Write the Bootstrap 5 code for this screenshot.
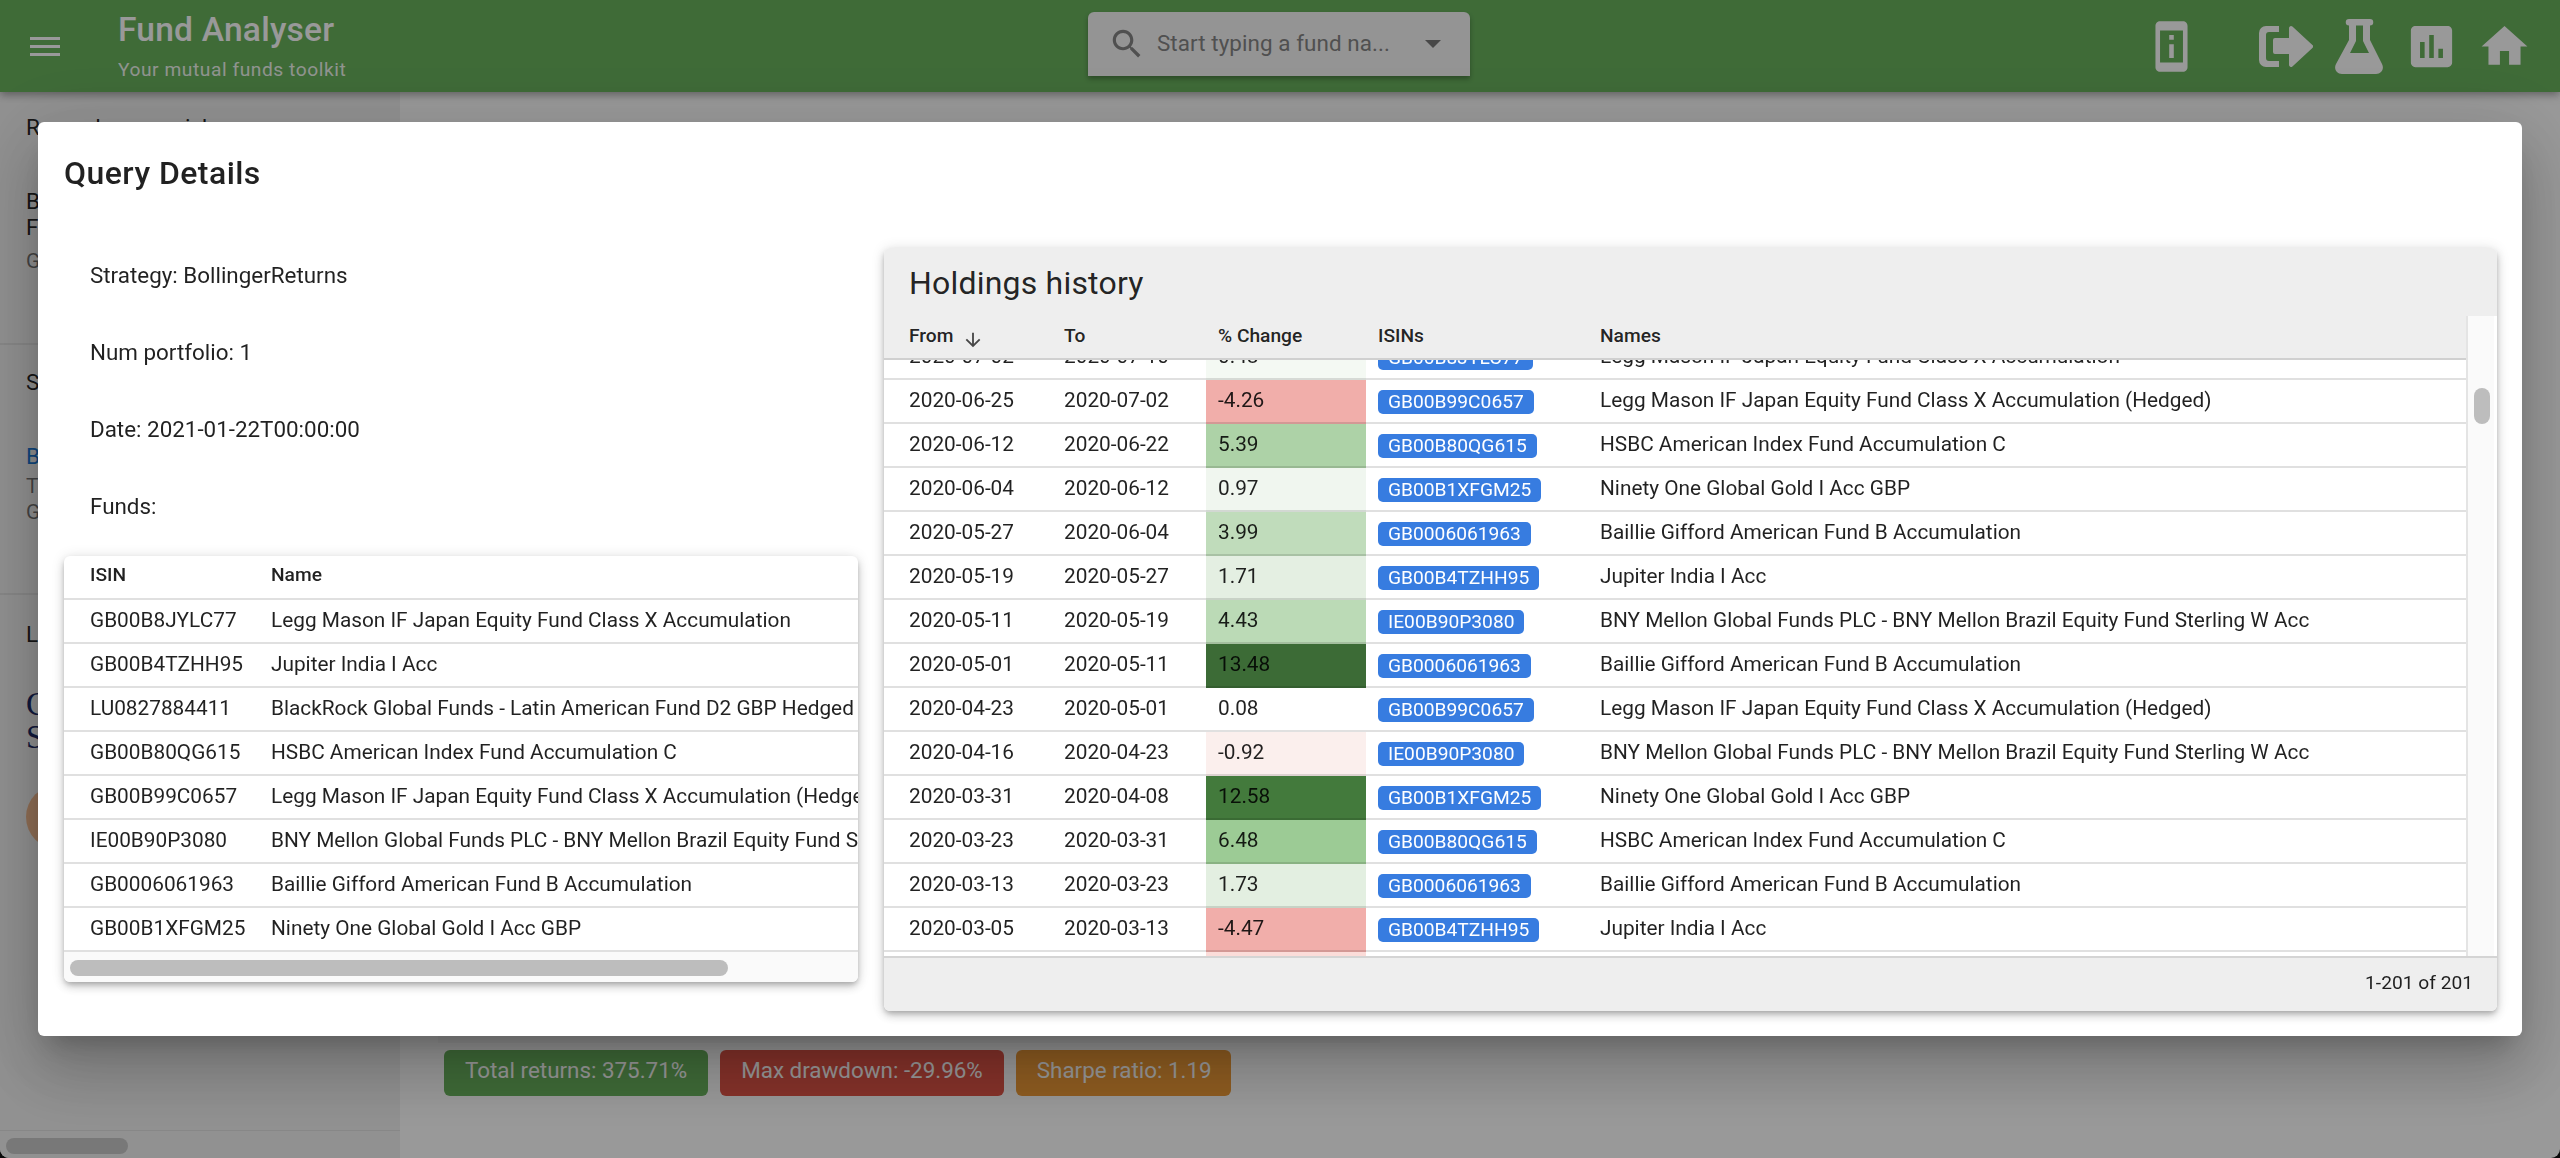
<!DOCTYPE html>
<html lang="en">
<head>
    <meta charset="UTF-8">
    <meta name="viewport" content="width=device-width, initial-scale=1.0">
    <title>Fund Analyser</title>
    <link href="https://cdn.jsdelivr.net/npm/bootstrap@5.3.0/dist/css/bootstrap.min.css" rel="stylesheet">
    <style>
        html, body { height: 100%; overflow: hidden; }
        body { font-family: Roboto, "Liberation Sans", sans-serif; font-size: 22.4px; color: rgba(0,0,0,.87); background: #111; }
        .app-shell { height: 100vh; background: #fff; border-radius: 0 0 9px 9px; overflow: hidden; }

        /* top bar */
        .app-bar { height: 92px; padding: 0; background: #69b25d; box-shadow: 0 3px 8px rgba(0,0,0,.35); color: #fff; position: relative; z-index: 2; flex-wrap: nowrap; flex: none; }
        .menu-btn { width: 118px; padding-left: 30px; flex: none; }
        .brand-block { width: 970px; flex: none; }
        .brand-name { font-size: 33.6px; font-weight: 500; line-height: 38px; margin-top: 11px; letter-spacing: .2px; }
        .brand-sub { font-size: 19.2px; line-height: 24px; margin-top: 9px; opacity: .9; letter-spacing: .55px; }
        .fund-search { width: 382px; height: 64px; margin-bottom: 4px; background: #f7f7f7; border-radius: 6px 6px 0 0; box-shadow: 0 3px 5px rgba(0,0,0,.3); color: #858585; padding-left: 20px; flex: none; }
        .fund-search svg { flex: none; }
        .fund-search span { font-size: 22.4px; letter-spacing: .08px; margin-left: 11px; width: 232px; white-space: nowrap; }
        .drop-arrow { width: 0; height: 0; margin-left: 36px; border-left: 8px solid transparent; border-right: 8px solid transparent; border-top: 8px solid #787878; }
        .bar-icons { margin-left: auto; margin-right: 19px; }
        .bar-icon { width: 73px; height: 73px; }
        .bar-icon svg { fill: #fff; }
        .icon-gap { margin-right: 41px; }

        /* page behind the dialog */
        .side-panel { width: 400px; flex: none; background: #f2f2f2; }
        .side-section { padding: 0 26px; border-bottom: 2px solid #e2e2e2; }
        .side-one { height: 253px; padding-top: 22px; }
        .side-two { height: 250px; padding-top: 24px; }
        .side-three { flex: 1; padding-top: 26px; border-bottom-width: 1px; }
        .side-section p { margin: 0; line-height: 26px; white-space: nowrap; }
        .muted-line { color: rgba(0,0,0,.55); font-size: 20.8px; }
        .side-link { color: #1976d2; }
        .provider-logo { font-family: "Liberation Serif", serif; font-size: 33px; line-height: 33px; color: #1c2a66; margin-top: 41px; }
        .provider-dot { width: 64px; height: 64px; border-radius: 50%; background: #f2b98f; margin-top: 31px; }
        .side-scroll { height: 27px; padding: 7px 6px 4px; }
        .side-thumb { width: 122px; height: 16px; border-radius: 8px; background: #c8c8c8; }
        .main-area { padding: 0 0 62px 44px; }
        .main-card { background: #f8f8f8; width: 942px; margin: 100px 0 7px -6px; }
        .stat-row { gap: 12px; }
        .stat-chip { color: #fff; height: 46px; line-height: 41px; padding: 0 21px; border-radius: 6px; white-space: nowrap; }
        .chip-green { background: #69b25d; }
        .chip-red { background: #df5346; }
        .chip-orange { background: #ee9a37; padding-right: 19px; }

        /* dialog */
        .modal-backdrop { --bs-backdrop-opacity: .4; }
        .query-dialog { max-width: none; width: 2484px; margin: 122px 0 0 38px; }
        .query-dialog .modal-content { height: 914px; border: 0; border-radius: 6px; color: rgba(0,0,0,.87); box-shadow: 0 18px 24px -11px rgba(0,0,0,.2), 0 38px 61px 5px rgba(0,0,0,.14), 0 14px 74px 13px rgba(0,0,0,.12); }
        .query-title { font-size: 32px; font-weight: 500; line-height: 51px; letter-spacing: .45px; margin: 0; padding: 26px 26px 0; }
        .query-body { padding: 49px 25px 25px 26px; gap: 26px; height: 812px; }
        .query-left { width: 794px; flex: none; }
        .query-left p { margin: 0 0 43.4px 26px; line-height: 33.6px; }
        .query-left p:first-child { margin-top: 11px; }
        .query-left p:last-of-type { margin-bottom: 32px; }

        .funds-box { background: #fff; border-radius: 6px; overflow: hidden; box-shadow: 0 3px 5px -1px rgba(0,0,0,.2), 0 5px 10px rgba(0,0,0,.14), 0 1px 14px rgba(0,0,0,.12); height: 426px; }
        .data-table { margin: 0; table-layout: fixed; border-collapse: separate; border-spacing: 0; --bs-table-bg: transparent; font-size: 20.8px; color: rgba(0,0,0,.87); }
        .data-table th, .data-table td { padding: 0; height: 44px; vertical-align: middle; white-space: nowrap; overflow: hidden; border-bottom: 2px solid rgba(0,0,0,.12); color: rgba(0,0,0,.87); background-clip: border-box; }
        .data-table th { font-size: 19.2px; font-weight: 500; padding-bottom: 2px; }
        .funds-table { width: 794px; }
        .funds-table th:first-child, .funds-table td:first-child { padding-left: 26px; width: 207px; }
        .funds-scroll { height: 30px; background: #fafafa; padding: 8px 6px; }
        .funds-thumb { width: 658px; height: 16px; border-radius: 8px; background: #bdbdbd; }

        .history-box { flex: 1; border-radius: 6px; overflow: hidden; box-shadow: 0 3px 5px -1px rgba(0,0,0,.2), 0 5px 10px rgba(0,0,0,.14), 0 1px 14px rgba(0,0,0,.12); background: #fff; height: 763px; }
        .history-head { height: 68px; background: #eee; padding: 10px 25px 0; font-size: 32px; line-height: 51px; letter-spacing: .2px; }
        .history-zone { height: 640px; }
        .history-scroll { width: 1582px; flex: none; height: 640px; overflow: hidden; }
        .history-table { width: 1582px; }
        .history-table thead th { position: sticky; top: 0; background: #eee; border-bottom: 2px solid #d0d0d0; z-index: 1; }
        .history-table .cell-from { width: 168px; padding-left: 25px; }
        .history-table .cell-to { width: 154px; padding-left: 12px; }
        .history-table .cell-pct { width: 160px; padding-left: 12px; }
        .history-table .cell-isin { width: 222px; padding-left: 12px; }
        .history-table .cell-name { padding-left: 12px; }
        .sort-arrow { fill: rgba(0,0,0,.7); margin: 0 0 -6px 4px; }
        .isin-tag { display: inline-block; height: 24px; line-height: 24px; padding: 0 10px; border-radius: 5px; background: #377ce0; color: #fff; font-size: 19.2px; vertical-align: middle; }
        .history-bar { width: 28px; flex: none; background: #fafafa; border-left: 2px solid #e4e4e4; padding: 72px 4px 0 6px; }
        .history-thumb { width: 16px; height: 36px; border-radius: 8px; background: #bdbdbd; }
        .history-foot { height: 55px; background: #eee; border-top: 2px solid #d4d4d4; font-size: 19.2px; line-height: 50px; text-align: right; padding-right: 24px; }
    </style>
</head>
<body>
<div class="app-shell d-flex flex-column">
    <nav class="navbar app-bar align-items-center justify-content-start">
        <div class="menu-btn">
            <svg width="30" height="20" viewBox="0 0 30 20" fill="#fff"><rect y="0" width="30" height="3"/><rect y="8" width="30" height="3"/><rect y="16" width="30" height="3"/></svg>
        </div>
        <div class="brand-block align-self-start">
            <div class="brand-name">Fund Analyser</div>
            <div class="brand-sub">Your mutual funds toolkit</div>
        </div>
        <div class="fund-search d-flex align-items-center">
            <svg width="38" height="38" viewBox="0 0 24 24" fill="#858585"><path d="M15.5 14h-.79l-.28-.27C15.41 12.59 16 11.11 16 9.5 16 5.91 13.09 3 9.5 3S3 5.91 3 9.5 5.91 16 9.5 16c1.61 0 3.09-.59 4.23-1.57l.27.28v.79l5 4.99L20.49 19l-4.99-5zm-6 0C7.01 14 5 11.99 5 9.5S7.01 5 9.5 5 14 7.01 14 9.5 11.99 14 9.5 14z"/></svg>
            <span>Start typing a fund na...</span>
            <div class="drop-arrow"></div>
        </div>
        <div class="bar-icons d-flex align-items-center">
            <div class="bar-icon d-flex align-items-center justify-content-center icon-gap">
                <svg width="55" height="55" viewBox="0 0 24 24"><path d="M13 7h-2v2h2V7zm0 4h-2v6h2v-6zm4-9.99L7 1c-1.1 0-2 .9-2 2v18c0 1.1.9 2 2 2h10c1.1 0 2-.9 2-2V3c0-1.1-.9-1.99-2-1.99zM17 19H7V5h10v14z"/></svg>
            </div>
            <div class="bar-icon d-flex align-items-center justify-content-center">
                <svg width="54" height="41" viewBox="0 0 54 41"><path d="M20 0H7a7 7 0 0 0-7 7v27a7 7 0 0 0 7 7h13v-6H10a3 3 0 0 1-3-3V9a3 3 0 0 1 3-3h10z"/><path d="M16 12h14V2a2 2 0 0 1 3.4-1.4L53.4 19a2 2 0 0 1 0 3L33.4 40.400a2 2 0 0 1-3.400-1.400V28H16a2 2 0 0 1-2-2V14a2 2 0 0 1 2-2z"/></svg>
            </div>
            <div class="bar-icon d-flex align-items-center justify-content-center">
                <svg width="48" height="55" viewBox="0 0 48 55"><path fill-rule="evenodd" d="M14 0h21a3.200 3.200 0 0 1 0 6.500V21l12 24c2.500 5-.5 10-6 10H7c-5.500 0-8.500-5-6-10l13-24V6.500A3.200 3.200 0 0 1 14 0zM21 6.500V22l-6 12h19l-6-12V6.500z"/></svg>
            </div>
            <div class="bar-icon d-flex align-items-center justify-content-center">
                <svg width="55" height="55" viewBox="0 0 24 24"><path d="M19 3H5c-1.100 0-2 .9-2 2v14c0 1.100.9 2 2 2h14c1.100 0 2-.9 2-2V5c0-1.100-.9-2-2-2zM9 17H7v-7h2v7zm4 0h-2V7h2v10zm4 0h-2v-4h2v4z"/></svg>
            </div>
            <div class="bar-icon d-flex align-items-center justify-content-center">
                <svg width="55" height="55" viewBox="0 0 24 24"><path d="M10 20v-6h4v6h5v-8h3L12 3 2 12h3v8z"/></svg>
            </div>
        </div>
    </nav>

    <div class="d-flex flex-grow-1">
        <aside class="side-panel d-flex flex-column">
            <section class="side-section side-one">
                <p class="mb-5">Reward versus risk</p>
                <p>Baillie Gifford American</p>
                <p>Fund B Accumulation</p>
                <p class="muted-line mt-2">GB0006061963</p>
            </section>
            <section class="side-section side-two">
                <p class="mb-5">Strategy</p>
                <p class="side-link">BollingerReturns</p>
                <p class="muted-line mt-1">Tracks bands on returns</p>
                <p class="muted-line">Growth focus</p>
            </section>
            <section class="side-section side-three">
                <p>Latest provider</p>
                <div class="provider-logo">Charles<br>Stanley</div>
                <div class="provider-dot"></div>
            </section>
            <div class="side-scroll"><div class="side-thumb"></div></div>
        </aside>
        <main class="main-area d-flex flex-column flex-grow-1">
            <div class="main-card flex-grow-1"></div>
            <div class="d-flex stat-row">
                <div class="stat-chip chip-green">Total returns: 375.71%</div>
                <div class="stat-chip chip-red">Max drawdown: -29.96%</div>
                <div class="stat-chip chip-orange">Sharpe ratio: 1.19</div>
            </div>
        </main>
    </div>
</div>

<div class="modal-backdrop show"></div>
<div class="modal d-block" tabindex="-1">
    <div class="modal-dialog query-dialog">
        <div class="modal-content">
            <h2 class="query-title">Query Details</h2>
            <div class="query-body d-flex">
                <div class="query-left">
                    <p>Strategy: BollingerReturns</p>
                    <p>Num portfolio: 1</p>
                    <p>Date: 2021-01-22T00:00:00</p>
                    <p>Funds:</p>
                    <div class="funds-box">
                        <table class="table data-table funds-table">
                            <thead><tr><th>ISIN</th><th>Name</th></tr></thead>
                            <tbody>
                                <tr><td>GB00B8JYLC77</td><td>Legg Mason IF Japan Equity Fund Class X Accumulation</td></tr>
                                <tr><td>GB00B4TZHH95</td><td>Jupiter India I Acc</td></tr>
                                <tr><td>LU0827884411</td><td>BlackRock Global Funds - Latin American Fund D2 GBP Hedged</td></tr>
                                <tr><td>GB00B80QG615</td><td>HSBC American Index Fund Accumulation C</td></tr>
                                <tr><td>GB00B99C0657</td><td>Legg Mason IF Japan Equity Fund Class X Accumulation (Hedged)</td></tr>
                                <tr><td>IE00B90P3080</td><td>BNY Mellon Global Funds PLC - BNY Mellon Brazil Equity Fund Sterling W Acc</td></tr>
                                <tr><td>GB0006061963</td><td>Baillie Gifford American Fund B Accumulation</td></tr>
                                <tr><td>GB00B1XFGM25</td><td>Ninety One Global Gold I Acc GBP</td></tr>
                            </tbody>
                        </table>
                        <div class="funds-scroll"><div class="funds-thumb"></div></div>
                    </div>
                </div>
                <div class="history-box">
                    <div class="history-head">Holdings history</div>
                    <div class="history-zone d-flex">
                        <div class="history-scroll" id="historyScroll">
                            <table class="table data-table history-table">
                                <thead>
                                    <tr>
                                        <th class="cell-from">From <svg class="sort-arrow" width="22" height="22" viewBox="0 0 24 24"><path d="M20 12l-1.410-1.410L13 16.170V4h-2v12.170l-5.580-5.590L4 12l8 8 8-8z"/></svg></th>
                                        <th class="cell-to">To</th>
                                        <th class="cell-pct">% Change</th>
                                        <th class="cell-isin">ISINs</th>
                                        <th class="cell-name">Names</th>
                                    </tr>
                                </thead>
                                <tbody>
                                    <tr><td class="cell-from">2020-07-02</td><td class="cell-to">2020-07-10</td><td class="cell-pct" style="background-color:#f4f9f3">0.48</td><td class="cell-isin"><span class="isin-tag">GB00B8JYLC77</span></td><td class="cell-name">Legg Mason IF Japan Equity Fund Class X Accumulation</td></tr>
                                    <tr><td class="cell-from">2020-06-25</td><td class="cell-to">2020-07-02</td><td class="cell-pct" style="background-color:#f1aeaa">-4.26</td><td class="cell-isin"><span class="isin-tag">GB00B99C0657</span></td><td class="cell-name">Legg Mason IF Japan Equity Fund Class X Accumulation (Hedged)</td></tr>
                                    <tr><td class="cell-from">2020-06-12</td><td class="cell-to">2020-06-22</td><td class="cell-pct" style="background-color:#add2a7">5.39</td><td class="cell-isin"><span class="isin-tag">GB00B80QG615</span></td><td class="cell-name">HSBC American Index Fund Accumulation C</td></tr>
                                    <tr><td class="cell-from">2020-06-04</td><td class="cell-to">2020-06-12</td><td class="cell-pct" style="background-color:#f0f6ef">0.97</td><td class="cell-isin"><span class="isin-tag">GB00B1XFGM25</span></td><td class="cell-name">Ninety One Global Gold I Acc GBP</td></tr>
                                    <tr><td class="cell-from">2020-05-27</td><td class="cell-to">2020-06-04</td><td class="cell-pct" style="background-color:#c0dcbb">3.99</td><td class="cell-isin"><span class="isin-tag">GB0006061963</span></td><td class="cell-name">Baillie Gifford American Fund B Accumulation</td></tr>
                                    <tr><td class="cell-from">2020-05-19</td><td class="cell-to">2020-05-27</td><td class="cell-pct" style="background-color:#e4efe2">1.71</td><td class="cell-isin"><span class="isin-tag">GB00B4TZHH95</span></td><td class="cell-name">Jupiter India I Acc</td></tr>
                                    <tr><td class="cell-from">2020-05-11</td><td class="cell-to">2020-05-19</td><td class="cell-pct" style="background-color:#bbdab6">4.43</td><td class="cell-isin"><span class="isin-tag">IE00B90P3080</span></td><td class="cell-name">BNY Mellon Global Funds PLC - BNY Mellon Brazil Equity Fund Sterling W Acc</td></tr>
                                    <tr><td class="cell-from">2020-05-01</td><td class="cell-to">2020-05-11</td><td class="cell-pct" style="background-color:#3c6b36">13.48</td><td class="cell-isin"><span class="isin-tag">GB0006061963</span></td><td class="cell-name">Baillie Gifford American Fund B Accumulation</td></tr>
                                    <tr><td class="cell-from">2020-04-23</td><td class="cell-to">2020-05-01</td><td class="cell-pct" style="background-color:#fff">0.08</td><td class="cell-isin"><span class="isin-tag">GB00B99C0657</span></td><td class="cell-name">Legg Mason IF Japan Equity Fund Class X Accumulation (Hedged)</td></tr>
                                    <tr><td class="cell-from">2020-04-16</td><td class="cell-to">2020-04-23</td><td class="cell-pct" style="background-color:#fbefed">-0.92</td><td class="cell-isin"><span class="isin-tag">IE00B90P3080</span></td><td class="cell-name">BNY Mellon Global Funds PLC - BNY Mellon Brazil Equity Fund Sterling W Acc</td></tr>
                                    <tr><td class="cell-from">2020-03-31</td><td class="cell-to">2020-04-08</td><td class="cell-pct" style="background-color:#437a3c">12.58</td><td class="cell-isin"><span class="isin-tag">GB00B1XFGM25</span></td><td class="cell-name">Ninety One Global Gold I Acc GBP</td></tr>
                                    <tr><td class="cell-from">2020-03-23</td><td class="cell-to">2020-03-31</td><td class="cell-pct" style="background-color:#9ccb95">6.48</td><td class="cell-isin"><span class="isin-tag">GB00B80QG615</span></td><td class="cell-name">HSBC American Index Fund Accumulation C</td></tr>
                                    <tr><td class="cell-from">2020-03-13</td><td class="cell-to">2020-03-23</td><td class="cell-pct" style="background-color:#e3efe1">1.73</td><td class="cell-isin"><span class="isin-tag">GB0006061963</span></td><td class="cell-name">Baillie Gifford American Fund B Accumulation</td></tr>
                                    <tr><td class="cell-from">2020-03-05</td><td class="cell-to">2020-03-13</td><td class="cell-pct" style="background-color:#f1aeaa">-4.47</td><td class="cell-isin"><span class="isin-tag">GB00B4TZHH95</span></td><td class="cell-name">Jupiter India I Acc</td></tr>
                                    <tr><td class="cell-from">2020-02-26</td><td class="cell-to">2020-03-05</td><td class="cell-pct" style="background-color:#fbdcd9">-2.10</td><td class="cell-isin"><span class="isin-tag">GB00B99C0657</span></td><td class="cell-name">Legg Mason IF Japan Equity Fund Class X Accumulation (Hedged)</td></tr>
                                </tbody>
                            </table>
                        </div>
                        <div class="history-bar"><div class="history-thumb"></div></div>
                    </div>
                    <div class="history-foot">1-201 of 201</div>
                </div>
            </div>
        </div>
    </div>
</div>

<script src="https://cdn.jsdelivr.net/npm/bootstrap@5.3.0/dist/js/bootstrap.bundle.min.js"></script>
<script>
    // history table opens scrolled a little way down
    document.getElementById('historyScroll').scrollTop = 24;
</script>
</body>
</html>
